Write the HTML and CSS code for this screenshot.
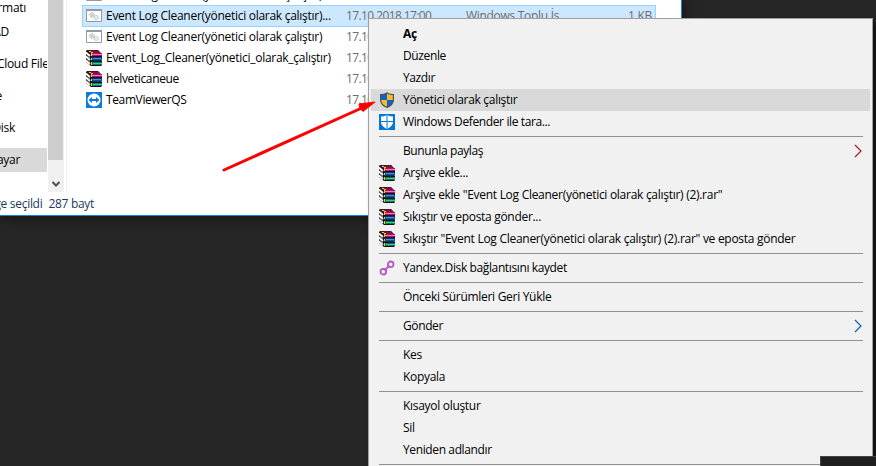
FILE: index.html
```
<!DOCTYPE html>
<html lang="tr">
<head>
<meta charset="utf-8">
<title>Event Log Cleaner</title>
<link rel="stylesheet" href="styles.css">
</head>
<body>
<svg class="defs" width="0" height="0" aria-hidden="true">
  <symbol id="rar" viewBox="0 0 16 16">
    <path d="M0 1l1-1h11l3 3h1v2l-1 1h1v4l-1 1h1v4l-1 1H5l-5-4z" fill="#16101a"/>
    <path d="M1 .5h11l3 3H5z" fill="#85103f"/>
    <path d="M3 1h2v1h2v1H5V2H3z" fill="#e8d010"/>
    <path d="M5 3h11v3H5z" fill="#b0106a"/><path d="M6 4h10v1H6z" fill="#f07cba"/>
    <path d="M5 7.500h11v3H5z" fill="#0c50a0"/><path d="M7 8h8v1H7z" fill="#3c98e8"/>
    <path d="M5 12h11v3H5z" fill="#0c7a5c"/><path d="M7 13h9v1H7z" fill="#3cc898"/>
    <path d="M5.500 3v3M5.500 8v2M5.500 12v3" stroke="#e8d010"/>
    <path d="M0 2.500l4 3.500M0 6.500l4 3.500M0 10.500l4 3.500" stroke="#fff" stroke-width="1.700"/>
    <path d="M0 4.500l4 3.500M0 8.500l4 3.500" stroke="#bbb" stroke-width=".6"/>
  </symbol>
  <symbol id="bat" viewBox="0 0 16 14">
    <path d="M.5 .5h15v12H.5z" fill="#fff" stroke="#929ba1"/>
    <path d="M0 0h16v2H0z" fill="#929ba1"/>
    <circle cx="6" cy="6" r="2.300" fill="#eee" stroke="#8d969c" stroke-dasharray="1 .6"/>
    <circle cx="6" cy="6" r=".8" fill="#999"/>
    <circle cx="10.300" cy="8.500" r="2" fill="#eee" stroke="#9bb0bf" stroke-dasharray="1 .6"/>
  </symbol>
</svg>
<main class="desktop">
  <section class="window">
    <div class="panes">
      <nav class="tree">
        <span>Resim Formatı</span><span>AutoCAD</span><span class="cloud">Creative Cloud Files</span><span class="drive">OneDrive</span><span class="disk">Yandex.Disk</span><span class="current">Bu bilgisayar</span>
      </nav>
      <div class="scroll"><i></i><svg width="16" height="16" viewBox="0 0 16 16"><path d="M4.500 6 8 9.500 11.500 6" fill="none" stroke="#505050" stroke-width="2"/></svg></div>
      <div class="files">
        <div class="file"><svg><use href="#bat"/></svg><span class="name">Event Log Cleaner(yönetici olarak çalıştır)</span></div>
        <div class="file selected"><svg><use href="#bat"/></svg><span class="name">Event Log Cleaner(yönetici olarak çalıştır)...</span><span class="date">17.10.2018 17:00</span><span class="type">Windows Toplu İs...</span><span class="size">1 KB</span></div>
        <div class="file"><svg><use href="#bat"/></svg><span class="name">Event Log Cleaner(yönetici olarak çalıştır)</span><span class="date">17.10.2018 17:00</span></div>
        <div class="file"><svg><use href="#rar"/></svg><span class="name">Event_Log_Cleaner(yönetici_olarak_çalıştır)</span><span class="date">17.10.2018 17:00</span></div>
        <div class="file"><svg><use href="#rar"/></svg><span class="name tight">helveticaneue</span><span class="date">17.10.2018 17:00</span></div>
        <div class="file"><svg viewBox="0 0 16 16"><path d="M0 0h16v16H0z" fill="#0b7be0"/><circle cx="8" cy="8" r="6.500" fill="#fff"/><path d="M2.500 8 6 5v2h4V5l3.500 3L10 11V9H6v2z" fill="#0b7be0"/></svg><span class="name tight">TeamViewerQS</span><span class="date">17.10.2018 17:00</span></div>
      </div>
    </div>
    <footer class="status"><span>1 öğe seçildi</span><span>287 bayt</span><i></i></footer>
  </section>

  <div class="menu">
    <div class="item bold"><i></i><span>Aç</span></div>
    <div class="item"><i></i><span class="tight">Düzenle</span></div>
    <div class="item"><i></i><span class="tight">Yazdır</span></div>
    <div class="item hover"><svg viewBox="0 0 16 16"><path d="M8 .7C6 2 4 2.500 1.600 2.600v5C1.600 11.500 4.500 14 8 15.500z" fill="#0b64c8"/><path d="M8 .7C10 2 12 2.500 14.400 2.600v5C14.400 11.500 11.500 14 8 15.500z" fill="#fdb827"/><path d="M8 8h6.300C14.200 11.500 11.500 14 8 15.500z" fill="#0b64c8"/><path d="M8 8H1.700C1.800 11.500 4.500 14 8 15.500z" fill="#fdb827"/><path d="M8 .9C6 2.200 4 2.600 1.600 2.700v5C1.600 11.500 4.500 14 8 15.400c3.500-1.400 6.400-3.900 6.400-7.700v-5C12 2.600 10 2.200 8 .9z" fill="none" stroke="#4e5052" stroke-width="1.200"/></svg><span>Yönetici olarak çalıştır</span></div>
    <div class="item"><svg viewBox="0 0 16 16"><path d="M0 0h16v16H0z" fill="#0078d7"/><path d="M8 1C6 2 4 2.500 2 2.500V8c0 3 3 5.500 6 7 3-1.500 6-4 6-7V2.500C12 2.500 10 2 8 1z" fill="#fff"/><path d="M8 0v16M1 7.500h14" stroke="#0078d7" stroke-width="1"/></svg><span class="tight">Windows Defender ile tara...</span></div>
    <hr>
    <div class="item"><i></i><span class="tight">Bununla paylaş</span><svg class="arrow red" viewBox="0 0 9 14"><path d="M1 1l6 6-6 6"/></svg></div>
    <div class="item"><svg><use href="#rar"/></svg><span>Arşive ekle...</span></div>
    <div class="item"><svg><use href="#rar"/></svg><span class="loose">Arşive ekle "Event Log Cleaner(yönetici olarak çalıştır) (2).rar"</span></div>
    <div class="item"><svg><use href="#rar"/></svg><span>Sıkıştır ve eposta gönder...</span></div>
    <div class="item"><svg><use href="#rar"/></svg><span class="loose">Sıkıştır "Event Log Cleaner(yönetici olarak çalıştır) (2).rar" ve eposta gönder</span></div>
    <hr>
    <div class="item"><svg viewBox="0 0 16 16"><g fill="none" stroke="#b455c8" stroke-width="1.800"><circle cx="4.300" cy="11.700" r="2.800"/><circle cx="11.700" cy="4.300" r="2.800"/><path d="M5.500 10.500l5-5"/></g></svg><span class="tight">Yandex.Disk bağlantısını kaydet</span></div>
    <hr>
    <div class="item"><i></i><span>Önceki Sürümleri Geri Yükle</span></div>
    <hr>
    <div class="item"><i></i><span class="tight">Gönder</span><svg class="arrow" viewBox="0 0 9 14"><path d="M1 1l6 6-6 6"/></svg></div>
    <hr>
    <div class="item"><i></i><span>Kes</span></div>
    <div class="item"><i></i><span>Kopyala</span></div>
    <hr>
    <div class="item"><i></i><span>Kısayol oluştur</span></div>
    <div class="item"><i></i><span>Sil</span></div>
    <div class="item"><i></i><span class="tight">Yeniden adlandır</span></div>
    <hr>
  </div>
  <svg class="pointer" width="160" height="80" viewBox="0 0 160 80"><path d="M3 72L143 9" stroke="#f00" stroke-width="3" stroke-linecap="round"/><path d="M154 4L142 13.500 139 10.500 138 6z" fill="#f00" stroke="#f00"/></svg>
  <div class="corner"></div>
</main>
</body>
</html>
```
FILE: styles.css
```
* { box-sizing: border-box; }
body { margin: 0; font: 12px/21px "Open Sans", "Noto Sans", sans-serif; letter-spacing: -0.3px; color: #000; }
.defs { position: absolute; }
.tight { letter-spacing: -0.38px; }
.loose { letter-spacing: -0.28px; }
.desktop { position: relative; width: 876px; height: 466px; overflow: hidden; background: #262626; }
.window { width: 682px; height: 216px; background: #fff; border-right: 1px solid #1883d7; border-bottom: 1px solid #1883d7; box-shadow: 0 0 14px #0009; }
.panes { display: flex; height: 192px; overflow: hidden; }
.tree { width: 47px; margin-right: 1px; display: flex; flex-direction: column; align-items: flex-end; overflow: hidden; }
.tree span { flex: none; height: 24px; line-height: 24px; white-space: nowrap; padding-right: 21px; }
.tree span:first-child { margin-top: -4px; }
.tree span:nth-child(2) { padding-right: 38px; }
.tree .cloud { margin: 8px -7px 0 0; padding-right: 0; }
.tree .drive { margin-top: 8px; padding-right: 45px; }
.tree .disk { margin-top: 8px; padding-right: 32px; }
.tree .current { margin-top: 8px; padding-right: 27px; background: #d9d9d9; }
.scroll { width: 16px; background: #f0f0f0; display: flex; flex-direction: column; }
.scroll i { height: 160px; width: 15px; background: #cdcdcd; }
.scroll svg { margin-top: 16px; }
.files { flex: 1; margin-left: 2px; padding-left: 15px; border-left: 1px solid #f0f0f0; }
.file { display: flex; align-items: center; height: 21px; width: 574px; padding-left: 4px; white-space: nowrap; }
.file:first-child { margin-top: -16px; }
.file.selected { height: 22px; margin-bottom: -1px; padding-left: 3px; background: #cce8ff; border: 1px solid #99d1ff; }
.file.selected span { line-height: 20px; margin-top: -1px; }
.file svg { width: 16px; height: 16px; margin-right: 4px; flex: none; }
.name { width: 240px; }
.name:not(.tight) { letter-spacing: -0.28px; }
.date, .type, .size { color: #6d6d6d; }
.date { width: 120px; letter-spacing: -0.6px; }
.type { width: 100px; }
.size { flex: 1; text-align: right; padding-right: 3px; }
.status { display: flex; align-items: center; width: 104px; height: 23px; justify-content: flex-end; gap: 6px; white-space: nowrap; color: #1e395b; }
.status i { width: 1px; height: 12px; margin-left: 4px; background: #e5e5e5; }
.menu { position: absolute; left: 368px; top: 18px; width: 505px; height: 470px; padding: 4px 2px; background: #f1f1f1; border: 1px solid #a0a0a0; box-shadow: 3px 4px 4px #0009; }
.item { display: flex; align-items: center; height: 22px; padding-left: 8px; line-height: 22px; white-space: nowrap; }
.item > i, .item > svg:first-child { width: 16px; height: 16px; margin-right: 8px; flex: none; }
.item.hover { background: #d9d9d9; }
.bold { font-weight: 700; }
.menu hr { height: 1px; margin: 3px 7px 3px 8px; border: 0; background: #919191; }
.arrow { width: 9px; height: 14px; margin: 0 7px 0 auto; fill: none; stroke: #1060b0; stroke-width: 1.2; }
.arrow.red { stroke: #a02020; }
.pointer { position: absolute; left: 221px; top: 98px; }
.corner { position: absolute; left: 820px; top: 456px; width: 57px; height: 11px; background: #1f1f1f; border: 1px solid #444; }
```
